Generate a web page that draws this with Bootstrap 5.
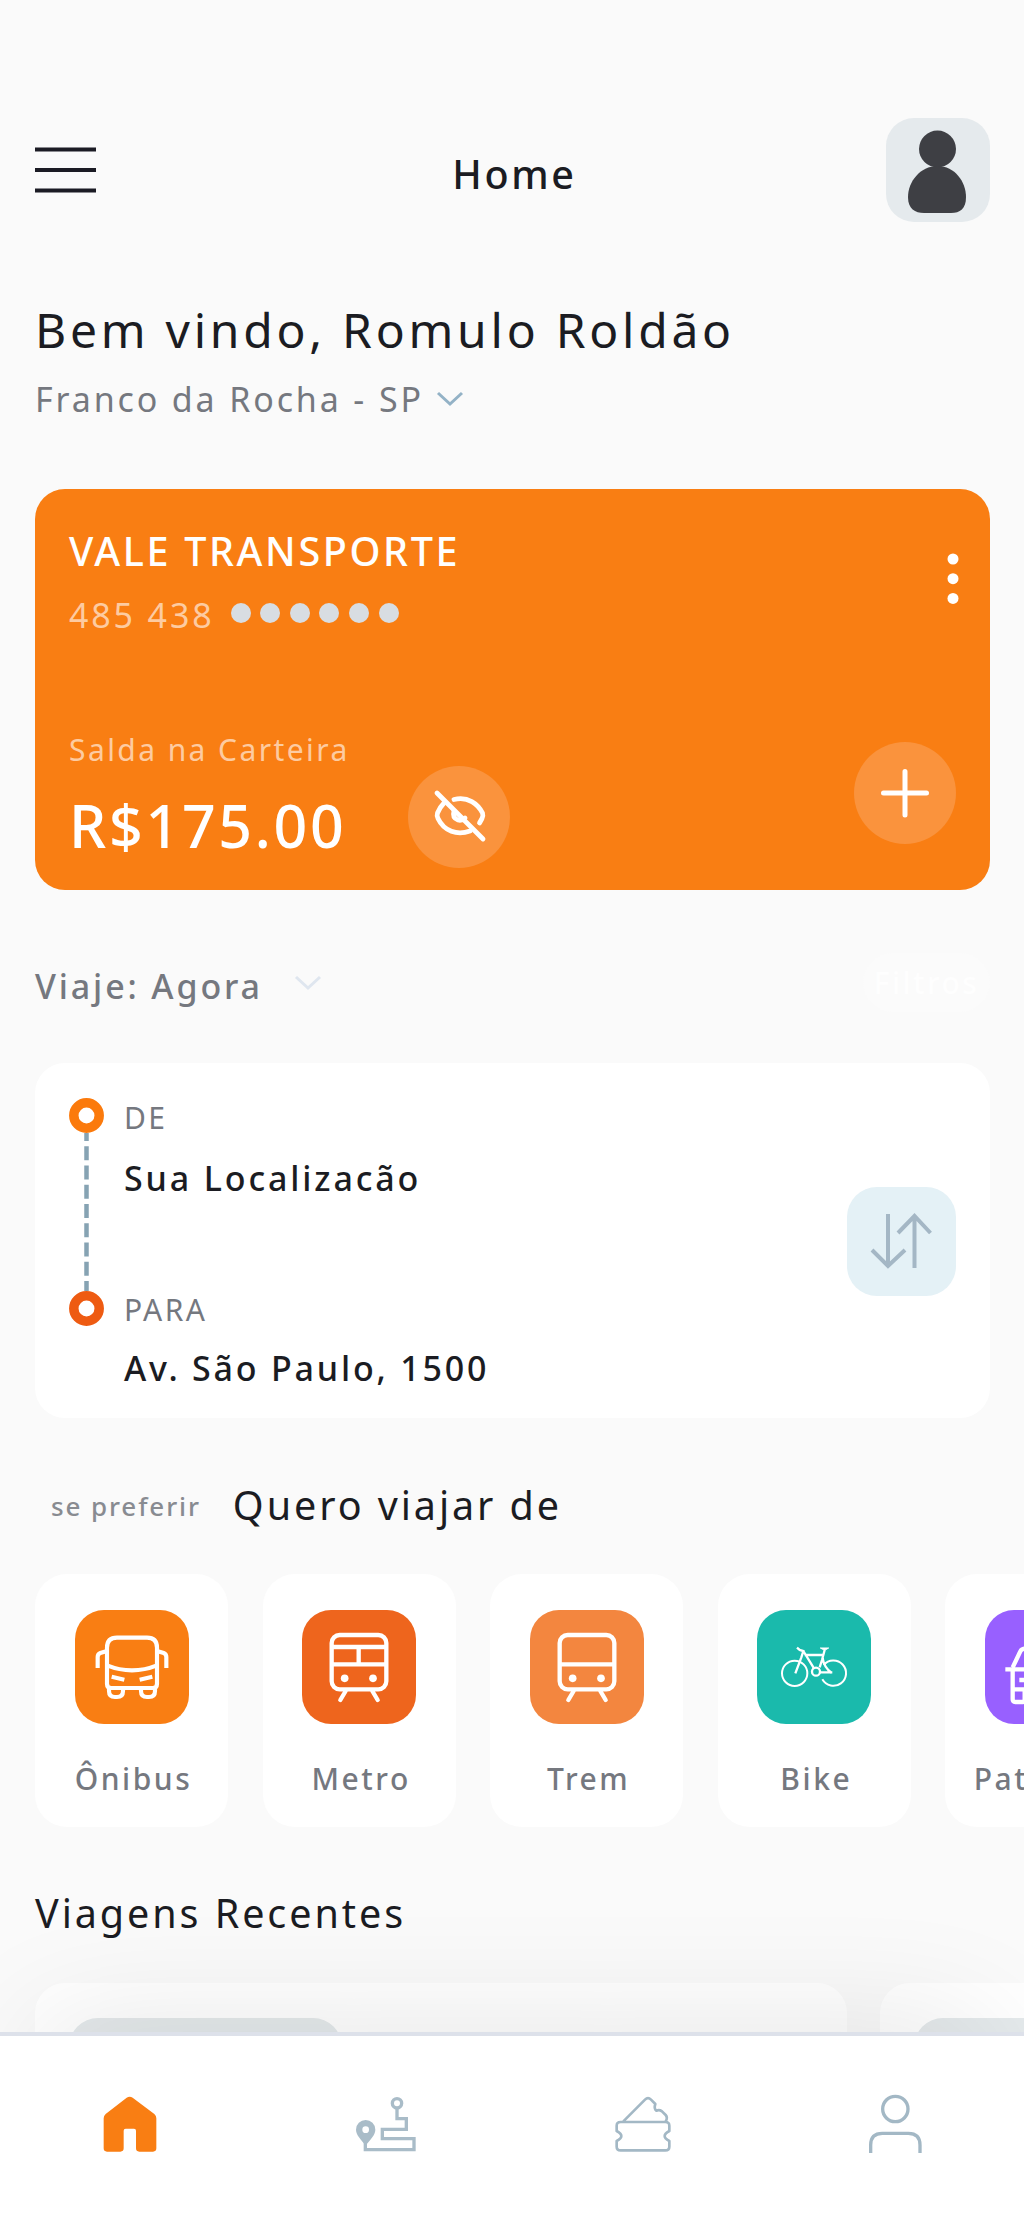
<!DOCTYPE html>
<html lang="pt-BR">
<head>
<meta charset="utf-8">
<meta name="viewport" content="width=device-width, initial-scale=1">
<title>Home</title>
<link rel="stylesheet" href="https://cdn.jsdelivr.net/npm/bootstrap@5.3.0/dist/css/bootstrap.min.css">
<style>
  body { font-family: "Noto Sans", "Open Sans", sans-serif; background: #fafafa; color: #1b1c22; height: 2216px; overflow: hidden; }
  svg { display: block; flex: none; }
  .screen { padding: 118px 34px 0 35px; }

  /* type scale */
  .t-line { white-space: nowrap; margin: 0; font-weight: 400; }
  .t-med { font-weight: 500; }
  .muted { color: #75787f; }
  .s26 { font-size: 26px; line-height: 36px; letter-spacing: 1.89px; }
  .s30 { font-size: 30px; line-height: 40px; letter-spacing: 2.42px; }
  .s34 { font-size: 34px; line-height: 46px; letter-spacing: 2.86px; }
  .s40 { font-size: 39.5px; line-height: 54px; letter-spacing: 2.93px; }
  .s40.t-med { letter-spacing: 2.64px; }
  .s48 { font-size: 48px; line-height: 64px; letter-spacing: 3.74px; }
  .s60 { font-size: 59px; line-height: 82px; letter-spacing: 2.7px; }

  .avatar { width: 104px; height: 104px; border-radius: 28px; background: #e5eaed; }
  .greeting { margin-top: 76px; }
  .place { margin-top: 14px; }

  .wallet { height: 401px; margin-top: 67px; padding: 35px 34px 22px; border-radius: 30px; background: #f97e13; color: #fff; }
  .wallet-number { margin-top: 14px; }
  .soft { color: #fdcba1; }
  .pips { gap: 9.6px; margin-left: 16px; }
  .pip { width: 20px; height: 20px; border-radius: 50%; background: #d8dde2; }
  .kebab { margin: 29px -3px 0 0; }
  .balance { width: 339px; }
  .amount { margin: 14px 0 2px; }
  .round-btn { width: 102px; height: 102px; border-radius: 50%; background: #fa933d; }
  .raised { margin-bottom: 24px; }

  .when { margin-top: 63px; }
  .when-text { padding-top: 7px; }
  .when-arrow { margin-left: 31px; }
  .chip { width: 127px; height: 59px; border-radius: 30px; background: #fbfbfb; color: #fefefe; }

  .trip { height: 355px; margin-top: 51px; border-radius: 30px; background: #fff; padding: 35px 34px 0; }
  .stops { margin-left: 20px; }
  .stop-name { margin-top: 17px; }
  .stop-next { margin-top: 89px; }
  .stop-last { margin-top: 15px; letter-spacing: 2.8px; }
  .swap { width: 109px; height: 109px; margin-top: 89px; border-radius: 30px; background: #e4f1f6; }

  .prefer { margin-top: 60px; }
  .prefer-note { margin: 10px 0 0 16px; opacity: .85; }
  .prefer-title { margin-left: 32px; }
  .modes { gap: 34.6px; margin-top: 42px; }
  .mode { width: 193px; height: 253px; flex: none; padding-top: 36px; border-radius: 32px; background: #fff; }
  .mode span { margin-top: 35px; padding-left: 4px; letter-spacing: 2.55px; }
  .tile { width: 114px; height: 114px; border-radius: 29px; overflow: hidden; }
  .tile-bus { background: #f97e13; }
  .tile-metro { background: #ee651d; }
  .tile-train { background: #f3863f; }
  .tile-bike { background: #1abaac; }
  .tile-car { background: #9860ff; }

  .recents-title { margin-top: 59px; }
  .recents { gap: 33px; margin-top: 43px; }
  .recent { width: 812px; height: 260px; flex: none; border-radius: 30px; background: #fff; padding: 35px 34px; }
  .thumb { width: 273px; height: 120px; border-radius: 29px; background: #e5eaec; }
  .bottom-bar { height: 184px; border-top: 4px solid #dde1ea; background: #fff; padding-top: 52px; box-shadow: 0 -40px 130px -40px rgba(0,0,0,.12); }
</style>
</head>
<body>
<main class="screen">
  <header class="row g-0 align-items-center">
    <div class="col-3">
      <svg width="61" height="46" viewBox="0 0 61 46" stroke="#1b1b24" stroke-width="4"><path d="M0 2.500H61M0 23H61M0 43.500H61"/></svg>
    </div>
    <div class="col-6 text-center pt-2 ps-1"><h1 class="t-line s40 t-med">Home</h1></div>
    <div class="col-3 d-flex justify-content-end">
      <div class="avatar">
        <svg width="104" height="104" viewBox="0 0 104 104" fill="#3e3f44"><circle cx="51.500" cy="31" r="18.500"/><path d="M51.500 48C69 48 80 64 80 79C80 91 74 95 65 95H38C29 95 22 91 22 79C22 64 34 48 51.500 48Z"/></svg>
      </div>
    </div>
  </header>

  <h2 class="greeting t-line s48">Bem vindo, Romulo Roldão</h2>
  <div class="place d-flex align-items-center">
    <span class="t-line s34 muted">Franco da Rocha - SP</span>
    <svg class="ms-2 ps-1" width="32" height="16" viewBox="0 0 28 16" fill="none" stroke="#93b2c6" stroke-width="3"><path d="M2 2L14 13L26 2"/></svg>
  </div>

  <section class="wallet d-flex flex-column justify-content-between">
    <div class="d-flex justify-content-between">
      <div>
        <h3 class="t-line s40 t-med">VALE TRANSPORTE</h3>
        <div class="wallet-number d-flex align-items-center">
          <span class="t-line s34 soft">485 438</span>
          <div class="pips d-flex pb-1"><i class="pip"></i><i class="pip"></i><i class="pip"></i><i class="pip"></i><i class="pip"></i><i class="pip"></i></div>
        </div>
      </div>
      <svg class="kebab" width="12" height="52" viewBox="0 0 12 52" fill="#fff"><circle cx="6" cy="6" r="5.500"/><circle cx="6" cy="25.700" r="5.500"/><circle cx="6" cy="45.400" r="5.500"/></svg>
    </div>
    <div class="d-flex align-items-end">
      <div class="balance">
        <p class="t-line s30 soft">Salda na Carteira</p>
        <p class="amount t-line s60 t-med">R$175.00</p>
      </div>
      <div class="round-btn">
        <svg width="102" height="102" viewBox="408 766 102 102" fill="none" stroke="#fff" stroke-width="4.800" stroke-linecap="round"><path d="M437 793L483 839"/><path d="M454 799.500C468 796 478 804 482.500 813Q483.500 816 482 818.500L479.500 823"/><path d="M444 803Q440 807 437.500 813Q436.500 816 438 818.500C444 831 457 836 470 831"/><path d="M454 811Q452 818 458 820Q462 821 465 818"/></svg>
      </div>
      <div class="round-btn raised ms-auto">
        <svg width="102" height="102" viewBox="0 0 102 102" stroke="#fff" stroke-width="5" stroke-linecap="round"><path d="M51 29.500V73M29.500 51H72.500"/></svg>
      </div>
    </div>
  </section>

  <div class="when d-flex align-items-center">
    <span class="when-text t-line s34 t-med muted">Viaje: Agora</span>
    <svg class="when-arrow" width="28" height="16" viewBox="0 0 28 16" fill="none" stroke="#dfe6ef" stroke-width="3"><path d="M2 2L14 13L26 2"/></svg>
    <span class="chip ms-auto d-flex align-items-center justify-content-center t-line s30 t-med">Filtros</span>
  </div>

  <section class="trip d-flex">
    <svg width="35" height="228" viewBox="0 0 35 228" fill="none"><path d="M17.500 35V193" stroke="#86a3b3" stroke-width="4.500" stroke-dasharray="14 5.250" stroke-dashoffset="6"/><circle cx="17.500" cy="17.500" r="12.700" stroke="#fb7a0c" stroke-width="9.500"/><circle cx="17.500" cy="210.500" r="12.700" stroke="#ee5b12" stroke-width="9.500"/></svg>
    <div class="stops">
      <div class="t-line s30 muted">DE</div>
      <div class="stop-name t-line s34 t-med">Sua Localizacão</div>
      <div class="stop-next t-line s30 muted">PARA</div>
      <div class="stop-last t-line s34 t-med">Av. São Paulo, 1500</div>
    </div>
    <div class="swap ms-auto">
      <svg width="109" height="109" viewBox="846 1187 109 109" fill="none" stroke="#a4b7c5" stroke-width="4"><path d="M887 1214V1267M871 1250L887 1266L904 1250M913.500 1268V1215M897 1233L913.500 1216L929.500 1233"/></svg>
    </div>
  </section>

  <div class="prefer d-flex align-items-start">
    <span class="prefer-note t-line s26 t-med muted">se preferir</span>
    <h3 class="prefer-title t-line s40">Quero viajar de</h3>
  </div>

  <div class="modes d-flex">
    <div class="mode d-flex flex-column align-items-center">
      <div class="tile tile-bus">
        <svg width="114" height="114" viewBox="222 479 342 342" fill="none" stroke="#fff" stroke-width="12.500"><path d="M318 645V592Q318 562 348 562H438Q468 562 468 592V700Q468 713 455 713H331Q318 713 318 700ZM318 645Q393 675 468 645M324 713V722Q324 740 342 740H348Q366 740 366 722V713M420 713V722Q420 740 438 740H444Q462 740 462 722V713M332 679L370 688M454 679L416 688"/><path d="M318 602L298 608Q290 611 290 620V653M468 602L488 608Q496 611 496 620V653"/></svg>
      </div>
      <span class="t-line s30 t-med muted">Ônibus</span>
    </div>
    <div class="mode d-flex flex-column align-items-center">
      <div class="tile tile-metro">
        <svg width="114" height="114" viewBox="905 479 342 342" fill="none" stroke="#fff" stroke-width="13"><rect x="994" y="554" width="164" height="163" rx="24"/><path d="M994 590H1158M994 642H1158M1075 590V642"/><path d="M1036 722L1020 749M1116 722L1132 749" stroke-linecap="round"/><g fill="#fff" stroke="none"><circle cx="1033" cy="684" r="11.500"/><circle cx="1118" cy="684" r="11.500"/></g></svg>
      </div>
      <span class="t-line s30 t-med muted">Metro</span>
    </div>
    <div class="mode d-flex flex-column align-items-center">
      <div class="tile tile-train">
        <svg width="114" height="114" viewBox="905 479 342 342" fill="none" stroke="#fff" stroke-width="13"><rect x="994" y="554" width="164" height="163" rx="24"/><path d="M994 642H1158"/><path d="M1036 722L1020 749M1116 722L1132 749" stroke-linecap="round"/><g fill="#fff" stroke="none"><circle cx="1033" cy="684" r="11.500"/><circle cx="1118" cy="684" r="11.500"/></g></svg>
      </div>
      <span class="t-line s30 t-med muted">Trem</span>
    </div>
    <div class="mode d-flex flex-column align-items-center">
      <div class="tile tile-bike">
        <svg width="114" height="114" viewBox="0 0 342 342" fill="none" stroke="#fff" stroke-width="6"><circle cx="113" cy="190" r="38"/><path d="M200 165A38 38 0 1 1 196 208"/><circle cx="177" cy="185" r="12" stroke-width="7"/><path d="M120 113L128 120L139 123L133 142L115 190M143 135H200M139 123L171 175M203 120L195 150L188 172M197 145Q201 172 224 189M190 187H226" stroke-width="7"/><path d="M190 114H215L203 121Z" fill="#fff" stroke-width="3"/></svg>
      </div>
      <span class="t-line s30 t-med muted">Bike</span>
    </div>
    <div class="mode d-flex flex-column align-items-center">
      <div class="tile tile-car">
        <svg width="114" height="114" viewBox="0 0 342 342" fill="none" stroke="#fff" stroke-width="13"><path d="M83 172L106 124Q110 116 120 116H222Q232 116 236 124L259 172M61 178H281M83 172V268Q83 276 91 276H112Q119 276 119 268V238M259 172V268Q259 276 251 276H230Q223 276 223 268V238M83 238H259M103 210H122M220 210H239"/></svg>
      </div>
      <span class="t-line s30 t-med muted">Patinete</span>
    </div>
  </div>

  <h3 class="recents-title t-line s40">Viagens Recentes</h3>
  <div class="recents d-flex">
    <div class="recent"><div class="thumb"></div></div>
    <div class="recent"><div class="thumb"></div></div>
  </div>
</main>

<nav class="bottom-bar fixed-bottom">
  <div class="row g-0">
    <a class="col-3 d-flex justify-content-center" href="#" aria-label="Início"><svg width="72" height="72" viewBox="96 84 216 216" fill="#f97e13"><path d="M131 175Q131 167 137 162L200 113Q209 107 218 113L283 162Q289 167 289 175V265Q289 275 279 275H238Q228 275 228 265V212Q228 206 222 206H197Q191 206 191 212V265Q191 275 181 275H141Q131 275 131 265Z"/></svg></a>
    <a class="col-3 d-flex justify-content-center" href="#" aria-label="Rotas"><svg width="72" height="72" viewBox="864 84 216 216" fill="none" stroke="#a9bcc8" stroke-width="10"><circle cx="1011" cy="130" r="14"/><path d="M1011 145V176H1039V208H967V236H1062V269H916V245"/><path stroke="none" fill="#a9bcc8" fill-rule="evenodd" d="M917 180A29 29 0 0 1 946 209C946 225 930 240 917 256C904 240 888 225 888 209A29 29 0 0 1 917 180ZM917 199A10 10 0 1 0 917 219A10 10 0 1 0 917 199Z"/></svg></a>
    <a class="col-3 d-flex justify-content-center" href="#" aria-label="Bilhetes"><svg width="72" height="72" viewBox="72 84 216 216" fill="none" stroke="#a3b8c5" stroke-width="8" stroke-linejoin="round"><path d="M110 197Q110 186 122 186H256Q268 186 268 197V213Q254 221 254 228Q254 236 268 243V260Q268 271 256 271H122Q110 271 110 260V243Q124 236 124 228Q124 221 110 213ZM130 184L195 119Q204 110 213 119L226 132Q221 146 229 152Q238 148 246 154L257 165Q264 173 257 184"/></svg></a>
    <a class="col-3 d-flex justify-content-center" href="#" aria-label="Perfil"><svg width="72" height="72" viewBox="840 84 216 216" fill="none" stroke="#a3b8c5" stroke-width="10"><circle cx="946" cy="147" r="38"/><path d="M872 279V255Q872 220 907 220H985Q1020 220 1020 255V279"/></svg></a>
  </div>
</nav>
<script src="https://cdn.jsdelivr.net/npm/bootstrap@5.3.0/dist/js/bootstrap.bundle.min.js"></script>
</body>
</html>
